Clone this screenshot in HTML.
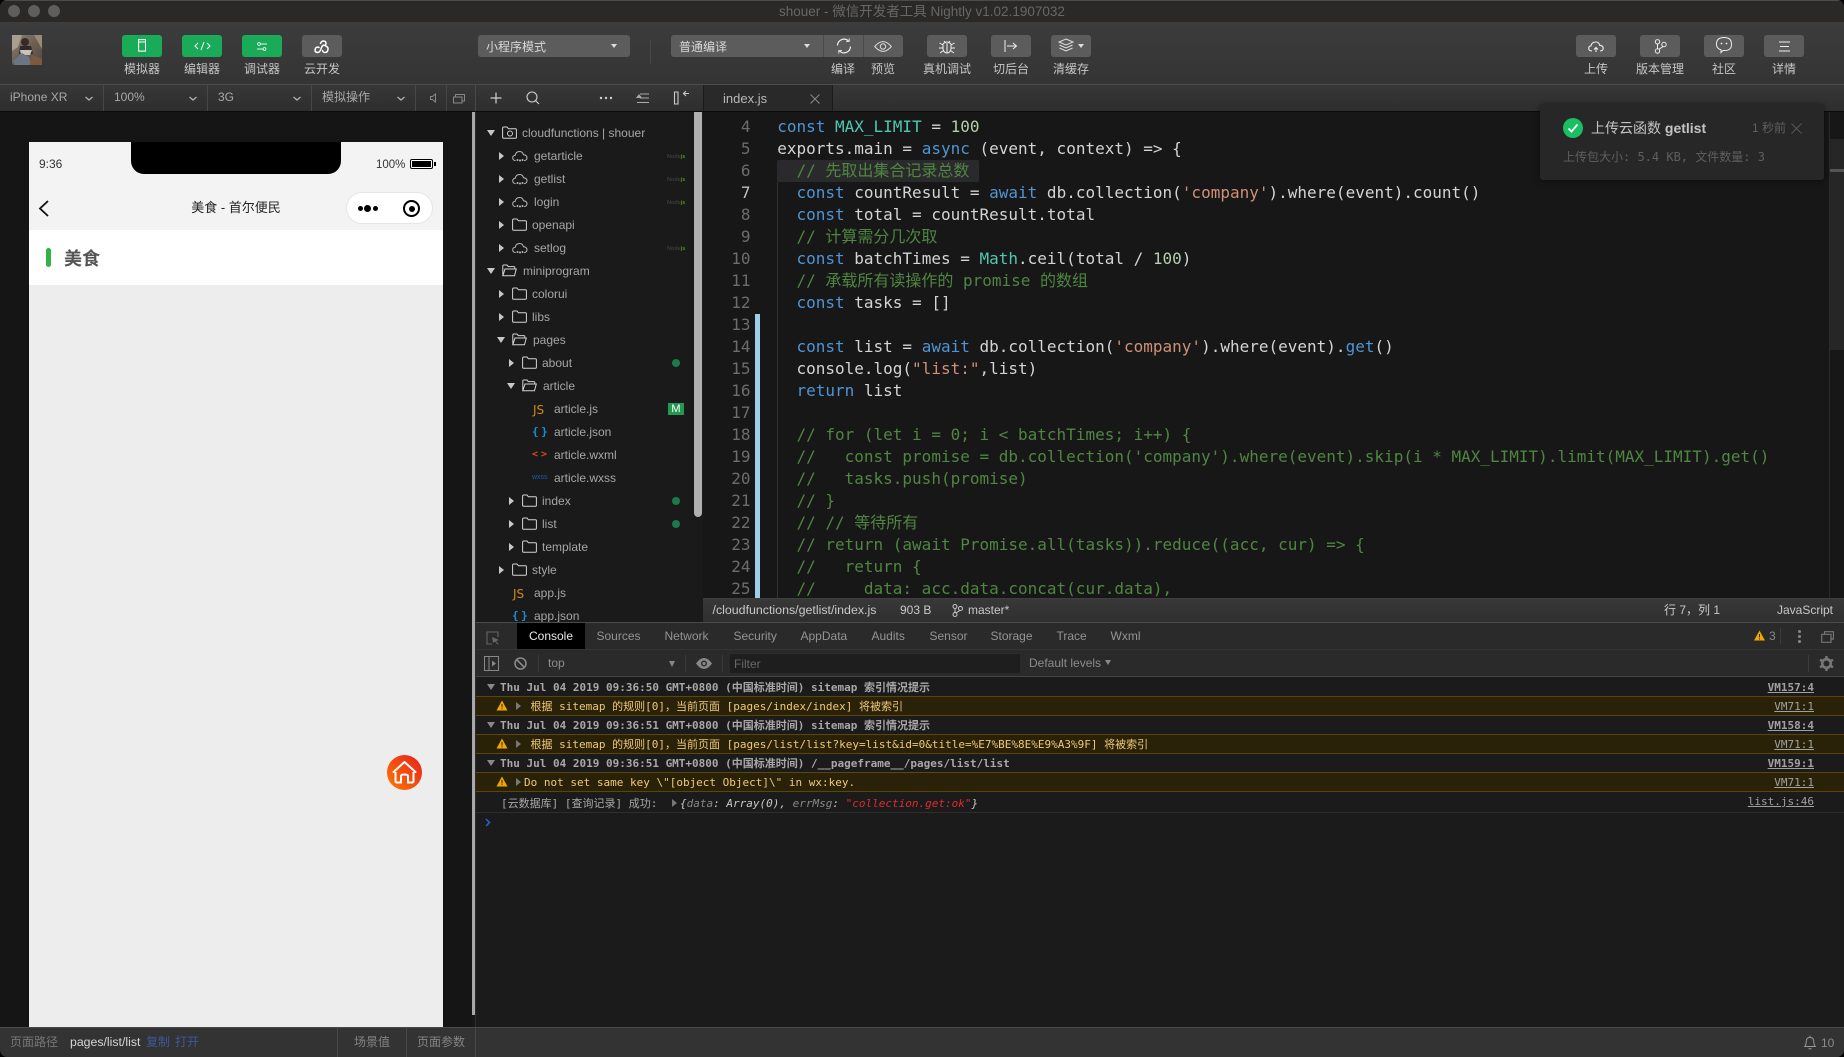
<!DOCTYPE html>
<html lang="zh">
<head>
<meta charset="utf-8">
<title>shouer</title>
<style>
html,body{margin:0;padding:0;background:#000;width:1844px;height:1057px;overflow:hidden}
*{box-sizing:border-box}
#w{position:relative;width:1844px;height:1057px;overflow:hidden;border-radius:7px;background:#181818;font-family:"Liberation Sans","Noto Sans CJK SC",sans-serif;font-size:12px;color:#aaa}
.a{position:absolute}
.t{position:absolute;white-space:nowrap;line-height:20px;height:20px}
.c{transform:translateX(-50%)}
.b{position:absolute;top:35px;height:22px;width:40px;border-radius:3px;background:#5c5c5c}
.g{background:#19ab57}
.b svg,.i{position:absolute}
.lab{color:#c6c6c6;top:59px}
.s{fill:none;stroke:#ddd;stroke-width:1.1}
.row{color:#a6a6a6}
.ar{position:absolute;width:0;height:0;border-top:4px solid transparent;border-bottom:4px solid transparent;border-left:5px solid #c8c8c8}
.ad{position:absolute;width:0;height:0;border-left:4.5px solid transparent;border-right:4.5px solid transparent;border-top:6px solid #c8c8c8}
.dot{position:absolute;width:8px;height:8px;border-radius:50%;background:#1c7a48;left:672px}
.nd{position:absolute;left:667px;margin-top:2px;font-size:5.5px;line-height:8px;color:#3c3c3c;white-space:nowrap;font-weight:bold}
.nd b{color:#4f8f1f}
.code{position:absolute;left:777.2px;white-space:pre;font-family:"DejaVu Sans Mono","Noto Sans CJK SC",monospace;font-size:16px;line-height:22px;height:22px;color:#d4d4d4}
.ln{position:absolute;left:712px;width:38.5px;text-align:right;font-family:"DejaVu Sans Mono",monospace;font-size:16px;line-height:22px;height:22px;color:#6c6c6c}
.k{color:#4f94d4}.n{color:#b5cea8}.m{color:#4ec9b0}.st{color:#ce9178}.cm{color:#4f8642}
.con{position:absolute;margin-top:1px;font-family:"DejaVu Sans Mono","Noto Sans CJK SC",monospace;font-size:11px;line-height:18px;height:18px;white-space:pre}
.wb{position:absolute;left:476px;right:0;height:20px;background:#2a2208;border-top:1px solid #5a4800;border-bottom:1px solid #5a4800}
.lk{position:absolute;right:30px;margin-top:1px;font-family:"DejaVu Sans Mono",monospace;font-size:11px;line-height:18px;height:18px;color:#a0a0a0;text-decoration:underline}
.tab{color:#949494;top:626px;margin-left:.5px}
.vd{position:absolute;width:1px;background:#484848}
</style>
</head>
<body>
<div id="w">
<svg width="0" height="0" style="position:absolute">
<symbol id="fo" viewBox="0 0 15 13"><path d="M.6 2.2Q.6 1 1.8 1H5l1.4 1.8h7q1 0 1 1v7.4q0 1-1 1H1.6q-1 0-1-1z" fill="none" stroke="#d4d4d4" stroke-width="1"/></symbol>
<symbol id="fp" viewBox="0 0 15 13"><path d="M.8 11.6V2Q.8 1 1.8 1H5l1.3 1.6h5.5q1 0 1 1V5M.8 11.8 3 5h11.3L12.5 11.8z" fill="none" stroke="#d4d4d4" stroke-width="1"/></symbol>
<symbol id="cl" viewBox="0 0 16 13"><path d="M3.6 10.6Q.7 10.4.7 7.9q0-2.3 2.5-2.6Q4 1.5 7.5 1.5q3.2 0 4 3.3 3.3.2 3.5 3 0 2.6-2.9 2.8" fill="none" stroke="#b8b8b8" stroke-width="1"/><circle cx="5.5" cy="10" r="1" fill="#b8b8b8"/><circle cx="8" cy="10.5" r="1" fill="#b8b8b8"/><circle cx="10.5" cy="10" r="1" fill="#b8b8b8"/></symbol>
</svg>

<!-- title bar -->
<div class="a" style="left:0;top:0;width:1844px;height:22px;background:#2a2928;border-top:1px solid #4a4a4a"></div>
<div class="a" style="left:8px;top:5px;width:12px;height:12px;border-radius:50%;background:#5e5e5e"></div>
<div class="a" style="left:28px;top:5px;width:12px;height:12px;border-radius:50%;background:#5e5e5e"></div>
<div class="a" style="left:48px;top:5px;width:12px;height:12px;border-radius:50%;background:#5e5e5e"></div>
<div class="t" style="left:779px;top:2px;font-size:13.5px;color:#676767">shouer - 微信开发者工具 Nightly v1.02.1907032</div>

<!-- toolbar -->
<div class="a" style="left:0;top:22px;width:1844px;height:62px;background:linear-gradient(#3c3c3c,#343434)"></div>
<div class="a" style="left:0;top:84px;width:1844px;height:1px;background:#4c4c4c"></div>
<div class="a" style="left:0;top:85px;width:1844px;height:26px;background:linear-gradient(#373737,#2e2e2e)"></div>
<div class="a" style="left:0;top:111px;width:1844px;height:1px;background:#0c0c0c"></div>

<!-- avatar -->
<svg class="a" style="left:12px;top:35px" width="30" height="30" viewBox="0 0 30 30">
<defs><linearGradient id="av" x1="0" y1="0" x2="1" y2="1"><stop offset="0" stop-color="#8a8278"/><stop offset=".5" stop-color="#6e5e52"/><stop offset="1" stop-color="#4f4a44"/></linearGradient></defs>
<rect width="30" height="30" rx="2" fill="url(#av)"/>
<path d="M0 0h10L6 12 0 16z" fill="#a89e90"/><path d="M22 0h8v14z" fill="#9a8a78"/>
<circle cx="13" cy="7" r="4" fill="#3a2a24"/><path d="M8 11h11l2 8H7z" fill="#2e2a2c"/><path d="M8 15h12l-2 5H9z" fill="#c8c2ba"/><path d="M1 26l9-8 7 4 3 8H3z" fill="#6a7682"/><path d="M20 20l10 4v6H18z" fill="#7a5a40"/>
</svg>

<!-- left buttons -->
<div class="b g" style="left:122px"><svg style="left:16px;top:4px" width="8" height="13"><rect x=".6" y=".6" width="7" height="11.5" fill="none" stroke="#fff" stroke-width="1.1"/><path d="M.6 3h7" stroke="#fff"/></svg></div>
<div class="b g" style="left:182px"><svg style="left:12px;top:6px" width="17" height="10" fill="none" stroke="#fff" stroke-width="1"><path d="M4 2 1 5l3 3M13 2l3 3-3 3M10 1 7 9"/></svg></div>
<div class="b g" style="left:242px"><svg style="left:15px;top:7px" width="10" height="9" fill="none" stroke="#e8f4ec" stroke-width=".9"><path d="M3 2h7M0 7h6"/><circle cx="2" cy="2" r="1.4" fill="#19ab57"/><circle cx="7.5" cy="7" r="1.4" fill="#19ab57"/></svg></div>
<div class="b" style="left:302px"><svg style="left:12px;top:5px" width="16" height="14" fill="none" stroke="#fff" stroke-width="1.5" stroke-linecap="round"><path d="M6.5 3.5Q7.5 1 9.5 1q2.5 0 2.5 2.5 0 1-.7 1.6M5 7.500Q2.500 6.500 1.500 8.500 0 12 3.500 12.500q2 0 3-2.500L8 6.500q1-2 3-1 3.500 1.500 3 4-.5 3-3 3-2 0-2.500-2"/></svg></div>
<div class="t c lab" style="left:142px">模拟器</div>
<div class="t c lab" style="left:202px">编辑器</div>
<div class="t c lab" style="left:262px">调试器</div>
<div class="t c lab" style="left:322px">云开发</div>

<!-- mode selects -->
<div class="b" style="left:478px;width:152px"></div>
<div class="t" style="left:486px;top:37px;color:#d8d8d8">小程序模式</div>
<div class="a" style="left:611px;top:44px;border-left:3px solid transparent;border-right:3px solid transparent;border-top:4px solid #ddd"></div>
<div class="a" style="left:650px;top:40px;width:1px;height:24px;background:#4a4a4a"></div>

<div class="b" style="left:671px;width:232px"></div>
<div class="a" style="left:823px;top:35px;width:1px;height:22px;background:#4a4a4a"></div>
<div class="a" style="left:863px;top:35px;width:1px;height:22px;background:#4a4a4a"></div>
<div class="t" style="left:679px;top:37px;color:#d8d8d8">普通编译</div>
<div class="a" style="left:804px;top:44px;border-left:3px solid transparent;border-right:3px solid transparent;border-top:4px solid #ddd"></div>
<svg class="a" style="left:836px;top:38px" width="16" height="16" fill="none" stroke="#eee" stroke-width="1.2"><path d="M1.500 7.500a6.500 6.500 0 0 1 11-4.500M14.500 8.500a6.500 6.500 0 0 1-11 4.500"/><path d="M10 3.400h3.200V.5M6 12.600H2.800v2.900" stroke-width=".9"/></svg>
<svg class="a" style="left:874px;top:41px" width="18" height="11" fill="none" stroke="#ddd" stroke-width="1"><path d="M.7 5.500Q5 .6 9 .6t8.300 4.900Q13 10.400 9 10.400T.7 5.500z"/><circle cx="9" cy="5.500" r="2.700"/></svg>
<div class="t c lab" style="left:843px">编译</div>
<div class="t c lab" style="left:883px">预览</div>

<div class="b" style="left:927px"><svg style="left:11px;top:3px" width="18" height="16" fill="none" stroke="#eee" stroke-width="1"><path d="M5 6q4-4 8 0v5q-1 4-4 4t-4-4zM9 5v10M6 3l1.500 2M12 3l-1.500 2M5 7 1.500 5M13 7l3.500-2M5 10H1M13 10h4M5.500 12.500 2 15M12.500 12.500 16 15"/></svg></div>
<div class="t c lab" style="left:947px">真机调试</div>
<div class="b" style="left:991px"><svg style="left:13px;top:5px" width="14" height="12" fill="none" stroke="#eee" stroke-width="1"><path d="M1 0v12M3 6h9M9 3l3.500 3L9 9"/></svg></div>
<div class="t c lab" style="left:1011px">切后台</div>
<div class="b" style="left:1051px"><svg style="left:7px;top:3px" width="16" height="16" fill="none" stroke="#ddd" stroke-width="1"><path d="M8 1l7 3-7 3-7-3zM1.500 7 8 10l6.500-3M1.500 10 8 13l6.500-3"/></svg><div class="a" style="left:27px;top:9px;border-left:3px solid transparent;border-right:3px solid transparent;border-top:4px solid #ddd"></div></div>
<div class="t c lab" style="left:1071px">清缓存</div>

<!-- right buttons -->
<div class="b" style="left:1576px"><svg style="left:12px;top:6px" width="16" height="12" fill="none" stroke="#eee" stroke-width="1.1"><path d="M4 10H3.500Q.7 9.700.7 7.300q0-2.200 2.300-2.500Q3.800 1 7.700 1q3.400 0 4 3.300 3.300.2 3.500 3 0 2.400-2.900 2.700H12"/><path d="M8 11V7M6 8.500l2-2 2 2"/></svg></div>
<div class="t c lab" style="left:1596px">上传</div>
<div class="b" style="left:1640px"><svg style="left:14px;top:4px" width="13" height="15" fill="none" stroke="#eee" stroke-width="1"><circle cx="3.500" cy="2.800" r="2.200"/><circle cx="3.500" cy="12" r="2.200"/><circle cx="10" cy="5.500" r="2.200"/><path d="M3.500 5v4.800M9 7.500 5 10.300"/></svg></div>
<div class="t c lab" style="left:1660px">版本管理</div>
<div class="b" style="left:1704px"><svg style="left:11px;top:1px" width="18" height="18" fill="none" stroke="#eee" stroke-width="1"><path d="M9 1.500q7.500 0 7.500 6.700T9 14.500H8L6 16.500v-2.700Q1.500 12.500 1.500 8.200 1.500 1.500 9 1.500z"/><circle cx="6.500" cy="7.500" r=".9" fill="#eee" stroke="none"/><circle cx="11.500" cy="7.500" r=".9" fill="#eee" stroke="none"/></svg></div>
<div class="t c lab" style="left:1724px">社区</div>
<div class="b" style="left:1764px"><svg style="left:15px;top:6px" width="11" height="11" stroke="#eee" stroke-width="1.100"><path d="M0 1h11M1 5.500h9M0 10h11"/></svg></div>
<div class="t c lab" style="left:1784px">详情</div>

<!-- sub bar: device selects -->
<div class="t" style="left:10px;top:87px;color:#a8a8a8">iPhone XR</div>
<div class="t" style="left:114px;top:87px;color:#a8a8a8">100%</div>
<div class="t" style="left:218px;top:87px;color:#a8a8a8">3G</div>
<div class="t" style="left:322px;top:87px;color:#a8a8a8">模拟操作</div>
<svg class="a" style="left:0;top:85px" width="476" height="26" fill="none" stroke="#b0b0b0" stroke-width="1.300"><path d="M85.500 12l3.500 3 3.500-3M189.500 12l3.500 3 3.500-3M293.500 12l3.500 3 3.500-3M397.500 12l3.500 3 3.500-3"/><path d="M430.500 11.500h2l3-2.500v8l-3-2.500h-2z" stroke="#888" stroke-width="1"/><path d="M453.500 12h8.500v6h-8.500zM455.500 12V9.500h9V16h-2.500" stroke="#888" stroke-width="1"/></svg>
<div class="vd" style="left:103px;top:85px;height:26px"></div>
<div class="vd" style="left:207px;top:85px;height:26px"></div>
<div class="vd" style="left:311px;top:85px;height:26px"></div>
<div class="vd" style="left:415px;top:85px;height:26px"></div>
<div class="vd" style="left:446px;top:85px;height:26px;background:#444"></div>
<div class="vd" style="left:475px;top:85px;height:26px"></div>

<!-- tree toolbar -->
<svg class="a" style="left:476px;top:85px" width="227" height="26" fill="none" stroke="#d0d0d0" stroke-width="1.1">
<path d="M20 7.500v11M14.500 13h11" stroke-width="1.200"/>
<circle cx="56" cy="12" r="5"/><path d="M59.500 15.500 63 19"/>
<circle cx="125" cy="13" r="1.200" fill="#d0d0d0" stroke="none"/><circle cx="130" cy="13" r="1.200" fill="#d0d0d0" stroke="none"/><circle cx="135" cy="13" r="1.200" fill="#d0d0d0" stroke="none"/>
<path d="M164 9h9M164 13h9M161 17.500h12" stroke="#aaa"/><path d="M161 12.500l2-2.500 2 2.500z" fill="#aaa" stroke="#aaa"/>
<path d="M198.500 7h3.500v12h-3.500zM213 8.500h-5M210 6l-2.500 2.500L210 11" stroke="#ccc"/>
</svg>

<!-- editor tab -->
<div class="a" style="left:703px;top:85px;width:130px;height:26px;background:#292929;border-left:1px solid #1a1a1a;border-right:1px solid #1a1a1a"></div>
<div class="t" style="left:723px;top:89px;font-size:13px;color:#b8b8b8">index.js</div>
<svg class="a" style="left:810px;top:94px" width="10" height="10" stroke="#8a8a8a" stroke-width="1"><path d="M.5.500l9 9M9.500.500l-9 9"/></svg>

<!-- simulator -->
<div class="a" style="left:0;top:112px;width:472px;height:915px;background:#151515"></div>
<div class="a" style="left:472px;top:112px;width:3px;height:903px;background:#a8a8a8"></div>
<div class="a" style="left:475px;top:112px;width:1px;height:915px;background:#2e2e2e"></div>
<div class="a" style="left:29px;top:142px;width:414px;height:885px;background:#ededee"></div>
<div class="a" style="left:29px;top:142px;width:414px;height:88px;background:#f3f3f3"></div>
<div class="a" style="left:131px;top:142px;width:210px;height:32px;background:#000;border-radius:0 0 13px 13px"></div>
<div class="t" style="left:39px;top:154px;color:#333">9:36</div>
<div class="t" style="left:376px;top:155px;color:#333;font-size:11.5px">100%</div>
<div class="a" style="left:410px;top:159px;width:23px;height:10px;border:1.3px solid #000;border-radius:2px;background:#fff"></div>
<div class="a" style="left:412px;top:161px;width:19px;height:6px;background:#000"></div>
<div class="a" style="left:434px;top:162px;width:2px;height:4px;background:#000"></div>
<svg class="a" style="left:38px;top:199px" width="12" height="20" fill="none" stroke="#111" stroke-width="1.8"><path d="M10 2 2 9.500l8 7.500"/></svg>
<div class="t c" style="left:236px;top:198px;font-size:13px;color:#222">美食 - 首尔便民</div>
<div class="a" style="left:346px;top:192px;width:87px;height:32px;background:#fff;border:1px solid #e6e6e6;border-radius:16px"></div>
<div class="a" style="left:358px;top:206px;width:5px;height:5px;border-radius:50%;background:#000"></div>
<div class="a" style="left:364px;top:205px;width:7px;height:7px;border-radius:50%;background:#000"></div>
<div class="a" style="left:373px;top:206px;width:5px;height:5px;border-radius:50%;background:#000"></div>
<div class="a" style="left:403px;top:200px;width:17px;height:17px;border-radius:50%;border:2.2px solid #000"></div>
<div class="a" style="left:408.5px;top:205.5px;width:6px;height:6px;border-radius:50%;background:#000"></div>
<div class="a" style="left:29px;top:230px;width:414px;height:55px;background:#fff"></div>
<div class="a" style="left:46px;top:248px;width:5px;height:19px;background:#2fb344;border-radius:3px"></div>
<div class="t" style="left:64px;top:249px;font-size:18px;font-weight:bold;color:#555">美食</div>
<svg class="a" style="left:387px;top:755px" width="35" height="35" viewBox="0 0 35 35">
<defs><linearGradient id="hg" x1="1" y1="0" x2="0" y2="1"><stop offset="0" stop-color="#e5201f"/><stop offset="1" stop-color="#ff7a00"/></linearGradient></defs>
<circle cx="17.5" cy="17.5" r="17.5" fill="url(#hg)"/>
<path d="M6.500 17 17.500 7l11 10" fill="none" stroke="#fff" stroke-width="2" stroke-linecap="round" stroke-linejoin="round"/>
<path d="M8.500 17v9q0 1.500 1.500 1.500h4V21q0-1.500 3.500-1.500T21 21v6.500h4q1.500 0 1.500-1.500v-9" fill="none" stroke="#fff" stroke-width="2"/>
</svg>

<!-- tree -->
<div class="a" style="left:476px;top:112px;width:227px;height:510px;background:#1a1a1a"></div>
<div class="a" style="left:694px;top:112px;width:8px;height:405px;background:#b0b0b0;border-radius:0 0 4px 4px"></div>

<div class="ad" style="left:487px;top:130px"></div>
<svg class="i" style="left:502px;top:126px" width="15" height="13"><use href="#fo"/></svg><svg class="i" style="left:506px;top:130px" width="8" height="7" fill="none" stroke="#ccc"><circle cx="4" cy="3.500" r="2.500"/></svg>
<div class="t row" style="left:522px;top:123px">cloudfunctions | shouer</div>

<div class="ar" style="left:499px;top:152px"></div><svg class="i" style="left:512px;top:150px" width="16" height="13"><use href="#cl"/></svg><div class="t row" style="left:534px;top:146px">getarticle</div><div class="nd" style="top:151px">Node<b>js</b></div>
<div class="ar" style="left:499px;top:175px"></div><svg class="i" style="left:512px;top:173px" width="16" height="13"><use href="#cl"/></svg><div class="t row" style="left:534px;top:169px">getlist</div><div class="nd" style="top:174px">Node<b>js</b></div>
<div class="ar" style="left:499px;top:198px"></div><svg class="i" style="left:512px;top:196px" width="16" height="13"><use href="#cl"/></svg><div class="t row" style="left:534px;top:192px">login</div><div class="nd" style="top:197px">Node<b>js</b></div>
<div class="ar" style="left:499px;top:221px"></div><svg class="i" style="left:512px;top:218px" width="15" height="13"><use href="#fo"/></svg><div class="t row" style="left:532px;top:215px">openapi</div>
<div class="ar" style="left:499px;top:244px"></div><svg class="i" style="left:512px;top:242px" width="16" height="13"><use href="#cl"/></svg><div class="t row" style="left:534px;top:238px">setlog</div><div class="nd" style="top:243px">Node<b>js</b></div>
<div class="ad" style="left:487px;top:268px"></div><svg class="i" style="left:502px;top:264px" width="15" height="13"><use href="#fp"/></svg><div class="t row" style="left:523px;top:261px">miniprogram</div>
<div class="ar" style="left:499px;top:290px"></div><svg class="i" style="left:512px;top:287px" width="15" height="13"><use href="#fo"/></svg><div class="t row" style="left:532px;top:284px">colorui</div>
<div class="ar" style="left:499px;top:313px"></div><svg class="i" style="left:512px;top:310px" width="15" height="13"><use href="#fo"/></svg><div class="t row" style="left:532px;top:307px">libs</div>
<div class="ad" style="left:497px;top:337px"></div><svg class="i" style="left:512px;top:333px" width="15" height="13"><use href="#fp"/></svg><div class="t row" style="left:533px;top:330px">pages</div>
<div class="ar" style="left:509px;top:359px"></div><svg class="i" style="left:522px;top:356px" width="15" height="13"><use href="#fo"/></svg><div class="t row" style="left:542px;top:353px">about</div><div class="dot" style="top:359px"></div>
<div class="ad" style="left:507px;top:383px"></div><svg class="i" style="left:522px;top:379px" width="15" height="13"><use href="#fp"/></svg><div class="t row" style="left:543px;top:376px">article</div>
<div class="t" style="left:533px;top:400px;font-family:'DejaVu Sans',sans-serif;font-size:12px;color:#d08a18">JS</div><div class="t row" style="left:554px;top:399px">article.js</div>
<div class="a" style="left:668px;top:403px;width:16px;height:12px;background:#21994f;color:#fff;font-size:11px;line-height:12px;text-align:center">M</div>
<div class="t" style="left:532px;top:422px;font-family:'DejaVu Sans Mono',monospace;font-weight:bold;font-size:11px;color:#1f8fd0;letter-spacing:2.5px">{}</div><div class="t row" style="left:554px;top:422px">article.json</div>
<div class="t" style="left:532px;top:445px;font-family:'DejaVu Sans Mono',monospace;font-weight:bold;font-size:10px;color:#d84a18;letter-spacing:3px">&lt;&gt;</div><div class="t row" style="left:554px;top:445px">article.wxml</div>
<div class="t" style="left:532px;top:468px;font-size:7px;color:#1a5cb0">wxss</div><div class="t row" style="left:554px;top:468px">article.wxss</div>
<div class="ar" style="left:509px;top:497px"></div><svg class="i" style="left:522px;top:494px" width="15" height="13"><use href="#fo"/></svg><div class="t row" style="left:542px;top:491px">index</div><div class="dot" style="top:497px"></div>
<div class="ar" style="left:509px;top:520px"></div><svg class="i" style="left:522px;top:517px" width="15" height="13"><use href="#fo"/></svg><div class="t row" style="left:542px;top:514px">list</div><div class="dot" style="top:520px"></div>
<div class="ar" style="left:509px;top:543px"></div><svg class="i" style="left:522px;top:540px" width="15" height="13"><use href="#fo"/></svg><div class="t row" style="left:542px;top:537px">template</div>
<div class="ar" style="left:499px;top:566px"></div><svg class="i" style="left:512px;top:563px" width="15" height="13"><use href="#fo"/></svg><div class="t row" style="left:532px;top:560px">style</div>
<div class="t" style="left:513px;top:584px;font-family:'DejaVu Sans',sans-serif;font-size:12px;color:#d08a18">JS</div><div class="t row" style="left:534px;top:583px">app.js</div>
<div class="t" style="left:512px;top:606px;font-family:'DejaVu Sans Mono',monospace;font-weight:bold;font-size:11px;color:#1f8fd0;letter-spacing:2.5px">{}</div><div class="t row" style="left:534px;top:606px">app.json</div>

<!-- editor -->
<div class="a" style="left:703px;top:112px;width:1141px;height:486px;background:#171717;overflow:hidden" id="ed"></div>
<div class="a" style="left:703px;top:112px;width:1141px;height:486px;overflow:hidden">
<div class="a" style="left:74px;top:48px;width:202px;height:22px;background:#2a2a2c;border-radius:2px"></div>
<div class="a" style="left:74px;top:70px;width:1px;height:416px;background:#333"></div>
<div class="a" style="left:51.5px;top:202px;width:5px;height:284px;background:#9fcfe8"></div>
<div class="a" style="left:1126px;top:0;width:1px;height:486px;background:#2b2b2b"></div>
<div class="a" style="left:1127px;top:27px;width:14px;height:211px;background:#262626"></div>
<div class="a" style="left:1127px;top:57px;width:14px;height:3px;background:#555"></div>
</div>
<div class="a" style="left:703px;top:112px;width:1141px;height:486px;overflow:hidden">
<div style="position:absolute;left:-703px;top:-111px;width:1844px;height:1057px">
<div class="ln" style="top:115px">4</div><div class="code" style="top:115px"><span class="k">const</span> <span class="m">MAX_LIMIT</span> = <span class="n">100</span></div>
<div class="ln" style="top:137px">5</div><div class="code" style="top:137px">exports.main = <span class="k">async</span> (event, context) =&gt; {</div>
<div class="ln" style="top:159px">6</div><div class="code cm" style="top:159px">  // 先取出集合记录总数</div>
<div class="ln" style="top:181px;color:#c0c0c0">7</div><div class="code" style="top:181px">  <span class="k">const</span> countResult = <span class="k">await</span> db.collection(<span class="st">'company'</span>).where(event).count()</div>
<div class="ln" style="top:203px">8</div><div class="code" style="top:203px">  <span class="k">const</span> total = countResult.total</div>
<div class="ln" style="top:225px">9</div><div class="code cm" style="top:225px">  // 计算需分几次取</div>
<div class="ln" style="top:247px">10</div><div class="code" style="top:247px">  <span class="k">const</span> batchTimes = <span class="m">Math</span>.ceil(total / <span class="n">100</span>)</div>
<div class="ln" style="top:269px">11</div><div class="code cm" style="top:269px">  // 承载所有读操作的 promise 的数组</div>
<div class="ln" style="top:291px">12</div><div class="code" style="top:291px">  <span class="k">const</span> tasks = []</div>
<div class="ln" style="top:313px">13</div>
<div class="ln" style="top:335px">14</div><div class="code" style="top:335px">  <span class="k">const</span> list = <span class="k">await</span> db.collection(<span class="st">'company'</span>).where(event).<span class="k">get</span>()</div>
<div class="ln" style="top:357px">15</div><div class="code" style="top:357px">  console.log(<span class="st">"list:"</span>,list)</div>
<div class="ln" style="top:379px">16</div><div class="code" style="top:379px">  <span class="k">return</span> list</div>
<div class="ln" style="top:401px">17</div>
<div class="ln" style="top:423px">18</div><div class="code cm" style="top:423px">  // for (let i = 0; i &lt; batchTimes; i++) {</div>
<div class="ln" style="top:445px">19</div><div class="code cm" style="top:445px">  //   const promise = db.collection('company').where(event).skip(i * MAX_LIMIT).limit(MAX_LIMIT).get()</div>
<div class="ln" style="top:467px">20</div><div class="code cm" style="top:467px">  //   tasks.push(promise)</div>
<div class="ln" style="top:489px">21</div><div class="code cm" style="top:489px">  // }</div>
<div class="ln" style="top:511px">22</div><div class="code cm" style="top:511px">  // // 等待所有</div>
<div class="ln" style="top:533px">23</div><div class="code cm" style="top:533px">  // return (await Promise.all(tasks)).reduce((acc, cur) =&gt; {</div>
<div class="ln" style="top:555px">24</div><div class="code cm" style="top:555px">  //   return {</div>
<div class="ln" style="top:577px">25</div><div class="code cm" style="top:577px">  //     data: acc.data.concat(cur.data),</div>
</div>
</div>

<!-- notification -->
<div class="a" style="left:1540px;top:104px;width:284px;height:76px;background:#272727;border-radius:3px;box-shadow:0 1px 6px rgba(0,0,0,.5)"></div>
<svg class="a" style="left:1563px;top:118px" width="20" height="20"><circle cx="10" cy="10" r="10" fill="#1bbf63"/><path d="M5.500 10.500l3 3 6-7" fill="none" stroke="#fff" stroke-width="1.800"/></svg>
<div class="t" style="left:1591px;top:118px;font-size:14px;color:#c4c4c4">上传云函数 <b>getlist</b></div>
<div class="t" style="left:1752px;top:118px;color:#5f5f5f">1 秒前</div>
<svg class="a" style="left:1791px;top:123px" width="11" height="11" stroke="#555" stroke-width="1"><path d="M.5.500l10 10M10.500.500l-10 10"/></svg>
<div class="t" style="left:1563px;top:147px;font-family:'DejaVu Sans Mono','Noto Sans CJK SC',monospace;font-size:12px;color:#5f5f5f;white-space:pre">上传包大小: 5.4 KB, 文件数量: 3</div>

<!-- editor status -->
<div class="a" style="left:703px;top:598px;width:1141px;height:24px;background:linear-gradient(#383838,#2f2f2f);border-top:1px solid #3e3e3e"></div>
<div class="t" style="left:712.5px;top:600px;font-size:12.4px;color:#c8c8c8">/cloudfunctions/getlist/index.js</div>
<div class="t" style="left:900px;top:600px;color:#c8c8c8">903 B</div>
<svg class="a" style="left:952px;top:604px" width="11" height="13" fill="none" stroke="#c8c8c8" stroke-width="1"><circle cx="3" cy="2.500" r="2"/><circle cx="3" cy="10.500" r="2"/><circle cx="8.500" cy="4.500" r="2"/><path d="M3 4.500v4M8 6.500 4 8.800"/></svg>
<div class="t" style="left:968px;top:600px;color:#c8c8c8">master*</div>
<div class="t" style="left:1664px;top:600px;color:#c8c8c8">行 7，列 1</div>
<div class="t" style="right:11px;top:600px;color:#c8c8c8">JavaScript</div>

<!-- devtools -->
<div class="a" style="left:476px;top:622px;width:1368px;height:1px;background:#4a4a4a"></div>
<div class="a" style="left:476px;top:623px;width:1368px;height:27px;background:#2a2a2a;border-bottom:1px solid #333"></div>
<div class="a" style="left:476px;top:650px;width:1368px;height:27px;background:#2a2a2a;border-bottom:1px solid #444"></div>
<div class="a" style="left:517px;top:623px;width:68px;height:26px;background:#000"></div>
<svg class="a" style="left:486px;top:631px" width="14" height="14" fill="none" stroke="#666" stroke-width="1.1"><path d="M6 13H1V1h11v5"/><path d="M6 6l7 3-3 1 2.500 3-1 .5-2.500-3L7 12z" fill="#666" stroke="none"/></svg>
<div class="t c" style="left:551px;top:626px;color:#e8e8e8">Console</div>
<div class="t tab" style="left:596px">Sources</div>
<div class="t tab" style="left:664px">Network</div>
<div class="t tab" style="left:733px">Security</div>
<div class="t tab" style="left:800px">AppData</div>
<div class="t tab" style="left:871px">Audits</div>
<div class="t tab" style="left:929px">Sensor</div>
<div class="t tab" style="left:990px">Storage</div>
<div class="t tab" style="left:1056px">Trace</div>
<div class="t tab" style="left:1110px">Wxml</div>
<svg class="a" style="left:1754px;top:630px" width="11" height="11"><path d="M5.500.500 11 10.500H0z" fill="#f0a800"/><path d="M5.500 4v3.500M5.500 8.500v1" stroke="#2a2a2a"/></svg>
<div class="t" style="left:1769px;top:626px;color:#8a8a8a">3</div>
<div class="vd" style="left:1780px;top:628px;height:16px;background:#3a3a3a"></div>
<div class="a" style="left:1798px;top:630px;width:3px;height:3px;border-radius:50%;background:#888;box-shadow:0 5px 0 #888,0 10px 0 #888"></div>
<svg class="a" style="left:1821px;top:631px" width="13" height="12" fill="none" stroke="#777" stroke-width="1.2"><path d="M3.500 3V.7h9V8h-2.500"/><path d="M.7 3.300h9.300v8H.7z"/></svg>

<svg class="a" style="left:484px;top:656px" width="15" height="15" fill="none" stroke="#888" stroke-width="1"><path d="M.5 .5h14v14H.5zM5 .5v14"/><path d="M8 4.500l4 3-4 3z" fill="#888" stroke="none"/></svg>
<svg class="a" style="left:514px;top:657px" width="13" height="13" fill="none" stroke="#888" stroke-width="1.6"><circle cx="6.500" cy="6.500" r="5.500"/><path d="M2.500 2.500l8 8"/></svg>
<div class="vd" style="left:538px;top:655px;height:17px;background:#3c3c3c"></div>
<div class="t" style="left:548px;top:653px;color:#8c8c8c">top</div>
<div class="a" style="left:669px;top:661px;border-left:3.5px solid transparent;border-right:3.5px solid transparent;border-top:6px solid #888"></div>
<div class="vd" style="left:685px;top:655px;height:17px;background:#3c3c3c"></div>
<svg class="a" style="left:696px;top:658px" width="16" height="11"><path d="M0 5.500Q4 0 8 0t8 5.500Q12 11 8 11T0 5.500z" fill="#888"/><circle cx="8" cy="5.500" r="3" fill="#2a2a2a"/><circle cx="8" cy="5.500" r="1.600" fill="#888"/></svg>
<div class="vd" style="left:722px;top:655px;height:17px;background:#3c3c3c"></div>
<div class="a" style="left:730px;top:654px;width:290px;height:19px;background:#1e1e1e"></div>
<div class="t" style="left:734px;top:654px;color:#686868">Filter</div>
<div class="t" style="left:1029px;top:653px;color:#8c8c8c">Default levels</div>
<div class="a" style="left:1105px;top:660px;border-left:3px solid transparent;border-right:3px solid transparent;border-top:5px solid #888"></div>
<div class="vd" style="left:1808px;top:655px;height:17px;background:#3c3c3c"></div>
<svg class="a" style="left:1819px;top:656px" width="15" height="15"><circle cx="7.500" cy="7.500" r="4.300" fill="none" stroke="#777" stroke-width="2.600"/><path d="M7.500 0v3M7.500 12v3M1 3.700l2.600 1.500M11.400 9.800 14 11.300M1 11.300l2.600-1.500M11.400 5.200 14 3.700" stroke="#777" stroke-width="2.400"/></svg>

<!-- console -->
<div class="a" style="left:476px;top:677px;width:1368px;height:350px;background:#1b1b1b"></div>
<div class="wb" style="top:696px"></div>
<div class="wb" style="top:734px"></div>
<div class="wb" style="top:772px"></div>
<div class="a" style="left:476px;top:812px;width:1368px;height:1px;background:#2e2e2e"></div>

<div class="a" style="left:487px;top:684px;border-left:4px solid transparent;border-right:4px solid transparent;border-top:6px solid #888"></div>
<div class="con" style="left:500px;top:678px;color:#a8a8a8;font-weight:bold">Thu Jul 04 2019 09:36:50 GMT+0800 (中国标准时间) sitemap 索引情况提示</div>
<div class="lk" style="top:678px;font-weight:bold">VM157:4</div>
<svg class="a" style="left:496px;top:700px" width="12" height="11"><path d="M6 .5 11.500 10.500H.5z" fill="#f0a800"/><path d="M6 4v3.500M6 8.300v1" stroke="#2a2208"/></svg>
<div class="a" style="left:516px;top:702px;border-top:4px solid transparent;border-bottom:4px solid transparent;border-left:5px solid #777"></div>
<div class="con" style="left:530.5px;top:697px;color:#f0c878">根据 sitemap 的规则[0]，当前页面 [pages/index/index] 将被索引</div>
<div class="lk" style="top:697px">VM71:1</div>

<div class="a" style="left:487px;top:722px;border-left:4px solid transparent;border-right:4px solid transparent;border-top:6px solid #888"></div>
<div class="con" style="left:500px;top:716px;color:#a8a8a8;font-weight:bold">Thu Jul 04 2019 09:36:51 GMT+0800 (中国标准时间) sitemap 索引情况提示</div>
<div class="lk" style="top:716px;font-weight:bold">VM158:4</div>
<svg class="a" style="left:496px;top:738px" width="12" height="11"><path d="M6 .5 11.500 10.500H.5z" fill="#f0a800"/><path d="M6 4v3.500M6 8.300v1" stroke="#2a2208"/></svg>
<div class="a" style="left:516px;top:740px;border-top:4px solid transparent;border-bottom:4px solid transparent;border-left:5px solid #777"></div>
<div class="con" style="left:530.5px;top:735px;color:#f0c878">根据 sitemap 的规则[0]，当前页面 [pages/list/list?key=list&amp;id=0&amp;title=%E7%BE%8E%E9%A3%9F] 将被索引</div>
<div class="lk" style="top:735px">VM71:1</div>

<div class="a" style="left:487px;top:760px;border-left:4px solid transparent;border-right:4px solid transparent;border-top:6px solid #888"></div>
<div class="con" style="left:500px;top:754px;color:#a8a8a8;font-weight:bold">Thu Jul 04 2019 09:36:51 GMT+0800 (中国标准时间) /__pageframe__/pages/list/list</div>
<div class="lk" style="top:754px;font-weight:bold">VM159:1</div>
<svg class="a" style="left:496px;top:776px" width="12" height="11"><path d="M6 .5 11.500 10.500H.5z" fill="#f0a800"/><path d="M6 4v3.500M6 8.300v1" stroke="#2a2208"/></svg>
<div class="a" style="left:516px;top:778px;border-top:4px solid transparent;border-bottom:4px solid transparent;border-left:5px solid #777"></div>
<div class="con" style="left:524px;top:773px;color:#f0c878">Do not set same key \"[object Object]\" in wx:key.</div>
<div class="lk" style="top:773px">VM71:1</div>

<div class="con" style="left:501px;top:794px;color:#a8a8a8">[云数据库] [查询记录] 成功:</div>
<div class="a" style="left:672px;top:799px;border-top:4px solid transparent;border-bottom:4px solid transparent;border-left:5px solid #777"></div>
<div class="con" style="left:680px;top:794px;color:#c8c8c8;font-style:italic">{<span style="color:#888">data</span>: Array(0), <span style="color:#888">errMsg</span>: <span style="color:#e02c2c">"collection.get:ok"</span>}</div>
<div class="lk" style="top:792px">list.js:46</div>
<svg class="a" style="left:485px;top:818px" width="6" height="9" fill="none" stroke="#2a5fd8" stroke-width="1.5"><path d="M1 1l3.500 3.500L1 8"/></svg>

<!-- bottom bar -->
<div class="a" style="left:0;top:1027px;width:1844px;height:30px;background:#333;border-top:1px solid #4a4a4a"></div>
<div class="t" style="left:10px;top:1032px;color:#777">页面路径</div>
<div class="t" style="left:70px;top:1032px;font-size:12.3px;color:#d6d6d6">pages/list/list</div>
<div class="t" style="left:146px;top:1032px;color:#3c5a98">复制</div>
<div class="t" style="left:175px;top:1032px;color:#3c5a98">打开</div>
<div class="vd" style="left:337px;top:1028px;height:29px"></div>
<div class="t" style="left:354px;top:1032px;color:#858585">场景值</div>
<div class="vd" style="left:406px;top:1028px;height:29px"></div>
<div class="t" style="left:417px;top:1032px;color:#858585">页面参数</div>
<div class="vd" style="left:475px;top:1028px;height:29px"></div>
<svg class="a" style="left:1804px;top:1035px" width="12" height="15" fill="none" stroke="#999" stroke-width="1"><path d="M.8 11.500h10.400Q9.800 10 9.800 6.500 9.800 2.500 6 2.500T2.200 6.500Q2.200 10 .8 11.500zM6 .8v1.700M4.500 13.700h3"/></svg>
<div class="t" style="left:1821px;top:1033px;color:#8a8a8a;font-size:12px">10</div>
</div>
</body>
</html>
